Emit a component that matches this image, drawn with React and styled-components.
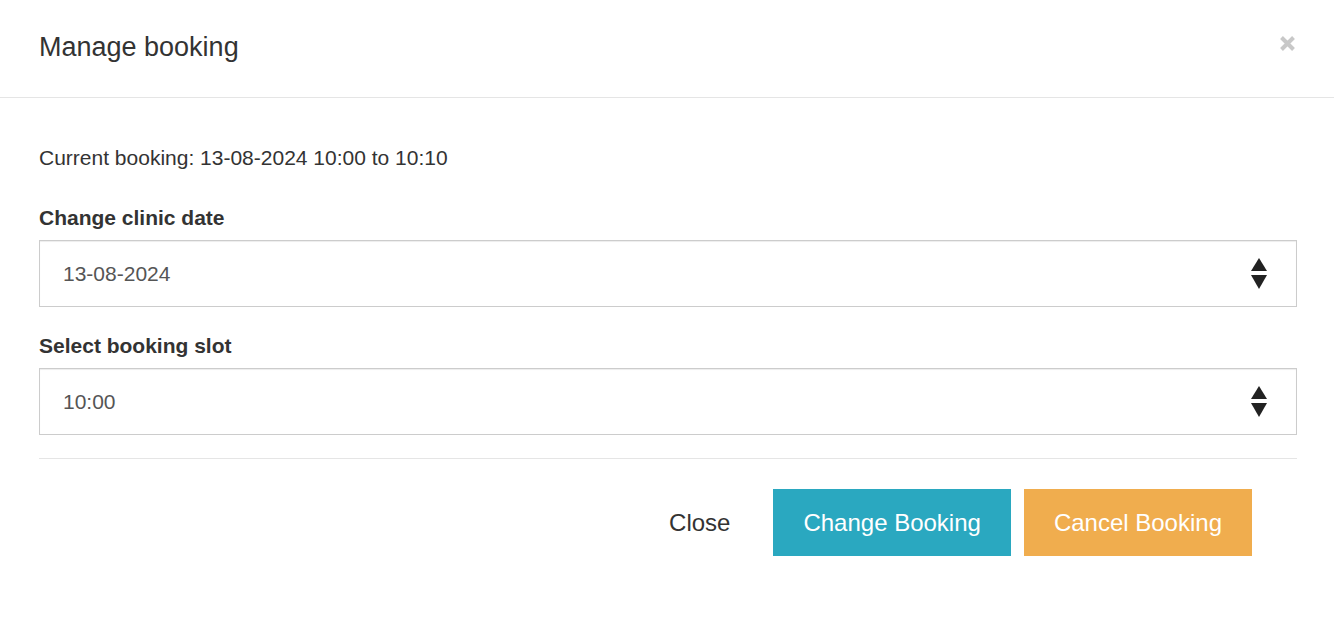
import React from "react";
import styled, { createGlobalStyle } from "styled-components";

const GlobalStyle = createGlobalStyle`
  * {
    box-sizing: border-box;
  }

  body {
    margin: 0;
    background: #fff;
    font-family: "Liberation Sans", Arial, Helvetica, sans-serif;
    color: #333;
  }
`;

const Modal = styled.div`
  width: 1334px;
  min-height: 620px;
  background: #fff;
`;

const Header = styled.div`
  display: flex;
  align-items: flex-start;
  justify-content: space-between;
  height: 98px;
  padding: 28px 38px 0 39px;
  border-bottom: 1px solid #e5e5e5;
`;

const Title = styled.h4`
  margin: 0;
  font-size: 27px;
  font-weight: 400;
  line-height: 38px;
  color: #333;
`;

const CloseX = styled.button`
  display: flex;
  margin-top: 7px;
  padding: 0;
  border: 0;
  background: none;
  cursor: pointer;
`;

const Body = styled.div`
  padding: 45px 37px 0 39px;
`;

const Text = styled.p`
  margin: 0 0 30px;
  font-size: 21px;
  line-height: 30px;
`;

const Group = styled.div`
  margin-bottom: ${(p) => p.$spacing}px;
`;

const Label = styled.label`
  display: block;
  margin-bottom: 7px;
  font-size: 21px;
  font-weight: 700;
  line-height: 30px;
`;

const Select = styled.div`
  display: flex;
  align-items: center;
  justify-content: space-between;
  height: 67px;
  padding: 0 29px 0 23px;
  border: 1px solid #ccc;
  box-shadow: inset 0 1px 1px rgba(0, 0, 0, 0.075);
  font-size: 21px;
  color: #555;
  cursor: pointer;
`;

const Footer = styled.div`
  display: flex;
  justify-content: flex-end;
  gap: 13px;
  padding: 30px 45px 0 0;
  border-top: 1px solid #e5e5e5;
`;

const palette = {
  link: { bg: "transparent", fg: "#333" },
  info: { bg: "#2aa8c0", fg: "#fff" },
  warning: { bg: "#f0ad4e", fg: "#fff" },
};

const Button = styled.button`
  height: 67px;
  padding: 0 30px;
  border: 0;
  border-radius: 0;
  background: ${(p) => palette[p.$kind].bg};
  color: ${(p) => palette[p.$kind].fg};
  font-family: "Liberation Sans", Arial, Helvetica, sans-serif;
  font-size: 24px;
  cursor: pointer;
`;

const Arrows = () => (
  <svg width="16" height="31" viewBox="0 0 16 31">
    <path d="M8 0 L16 13 L0 13 Z" fill="#222" />
    <path d="M0 17 L16 17 L8 31 Z" fill="#222" />
  </svg>
);

const Field = ({ label, value, spacing = 24 }) => (
  <Group $spacing={spacing}>
    <Label>{label}</Label>
    <Select>
      <span>{value}</span>
      <Arrows />
    </Select>
  </Group>
);

const App = () => (
  <>
    <GlobalStyle />
    <Modal>
      <Header>
        <Title>Manage booking</Title>
        <CloseX aria-label="Close">
          <svg width="17" height="17" viewBox="0 0 17 17">
            <path
              d="M2.5 2.5 L14.5 14.5 M14.5 2.5 L2.5 14.5"
              stroke="#c8c8c8"
              strokeWidth="4"
            />
          </svg>
        </CloseX>
      </Header>
      <Body>
        <Text>Current booking: 13-08-2024 10:00 to 10:10</Text>
        <Field label="Change clinic date" value="13-08-2024" />
        <Field label="Select booking slot" value="10:00" spacing={23} />
        <Footer>
          <Button $kind="link">Close</Button>
          <Button $kind="info">Change Booking</Button>
          <Button $kind="warning">Cancel Booking</Button>
        </Footer>
      </Body>
    </Modal>
  </>
);

export default App;
